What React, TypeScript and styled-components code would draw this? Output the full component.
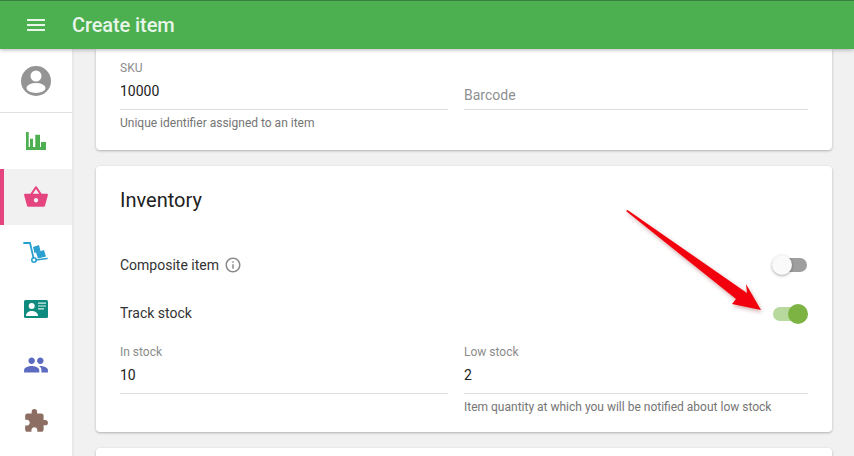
import React from "react";
import styled, { createGlobalStyle } from "styled-components";
import {
  MdExtension,
  MdInfoOutline,
  MdMenu,
  MdPeople,
  MdShoppingBasket,
} from "react-icons/md";

const GlobalStyle = createGlobalStyle`
  html, body {
    margin: 0;
    height: 100%;
    overflow: hidden;
    background: #f1f1f1;
    font-family: Roboto, "Liberation Sans", sans-serif;
  }
`;

const Page = styled.div`
  display: flex;
  flex-direction: column;
  width: 854px;
  height: 456px;
  overflow: hidden;
`;

const Header = styled.header`
  position: relative;
  z-index: 2;
  flex: none;
  display: flex;
  align-items: center;
  box-sizing: border-box;
  height: 49px;
  padding-left: 24px;
  gap: 24px;
  background: #4caf50;
  border-top: 1px solid #39803c;
  box-shadow: 0 1px 4px rgba(0, 0, 0, 0.28);
  color: #e8f5e9;
`;

const Title = styled.h1`
  margin: 0;
  font-size: 20px;
  font-weight: 500;
  line-height: 24px;
  letter-spacing: -0.1px;
`;

const Body = styled.div`
  flex: 1;
  display: flex;
  min-height: 0;
`;

const Sidebar = styled.nav`
  flex: none;
  width: 72px;
  background: #fff;
  box-shadow: 1px 0 2px rgba(0, 0, 0, 0.06);
`;

const Profile = styled.div`
  display: flex;
  align-items: center;
  justify-content: center;
  height: 63px;
  border-bottom: 1px solid #e0e0e0;
  color: #949494;
`;

const NavItem = styled.div<{ $active?: boolean; $color: string }>`
  display: flex;
  align-items: center;
  justify-content: center;
  box-sizing: border-box;
  height: 56px;
  color: ${(p) => p.$color};
  background: ${(p) => (p.$active ? "#f1f1f1" : "transparent")};
  border-left: 4px solid ${(p) => (p.$active ? "#e5457f" : "transparent")};
  padding-right: 4px;
`;

const Main = styled.main`
  flex: 1;
  min-width: 0;
  display: flex;
  flex-direction: column;
  gap: 16px;
  padding: 0 22px 0 24px;
`;

const Card = styled.section<{ $cut?: boolean }>`
  position: relative;
  flex: none;
  box-sizing: border-box;
  padding: 0 24px;
  background: #fff;
  border-radius: ${(p) => (p.$cut ? "0 0 4px 4px" : "4px")};
  box-shadow: 0 1px 3px rgba(0, 0, 0, 0.2), 0 1px 2px rgba(0, 0, 0, 0.08);
`;

const SkuCard = styled(Card)`
  height: 101px;
  padding-top: 11px;
`;

const InventoryCard = styled(Card)`
  height: 266px;
  padding-top: 22px;
`;

const NextCard = styled(Card)`
  height: 40px;
`;

const CardTitle = styled.h2`
  margin: 0 0 41px;
  font-size: 20px;
  font-weight: 400;
  line-height: 24px;
  color: #212121;
`;

const ToggleRow = styled.div`
  display: flex;
  align-items: center;
  justify-content: space-between;
  height: 24px;
  margin-bottom: 24px;
`;

const ToggleLabel = styled.span`
  display: flex;
  align-items: center;
  gap: 5px;
  font-size: 14px;
  color: #333;

  svg {
    color: #8a8a8a;
  }
`;

const Track = styled.span<{ $on?: boolean }>`
  position: relative;
  display: block;
  width: 34px;
  height: 14px;
  margin: ${(p) => (p.$on ? "2px" : "0")} 1px 0 0;
  border-radius: 7px;
  background: ${(p) => (p.$on ? "#b7d99d" : "#9e9e9e")};
`;

const Thumb = styled.span<{ $on?: boolean }>`
  position: absolute;
  top: -3px;
  left: ${(p) => (p.$on ? "15px" : "-1px")};
  width: 20px;
  height: 20px;
  border-radius: 50%;
  background: ${(p) => (p.$on ? "#7cb342" : "#fafafa")};
  box-shadow: ${(p) =>
    p.$on ? "none" : "0 1px 3px rgba(0, 0, 0, 0.35)"};
`;

const Fields = styled.div`
  display: grid;
  grid-template-columns: 328px 344px;
  column-gap: 16px;
`;

const StockFields = styled(Fields)`
  margin-top: -5px;
`;

const Field = styled.div`
  display: flex;
  flex-direction: column;
`;

const FieldLabel = styled.label`
  height: 16px;
  font-size: 12px;
  line-height: 16px;
  color: #8c8c8c;
`;

const FieldValue = styled.div<{ $placeholder?: boolean }>`
  box-sizing: border-box;
  height: 34px;
  padding-top: ${(p) => (p.$placeholder ? "9px" : "5px")};
  border-bottom: 1px solid #dedede;
  font-size: 14px;
  line-height: 20px;
  color: ${(p) => (p.$placeholder ? "#8f8f8f" : "#212121")};
`;

const Hint = styled.div`
  margin-top: 5px;
  font-size: 12px;
  line-height: 16px;
  color: #757575;
`;

const Arrow = styled.svg`
  position: absolute;
  left: 530px;
  top: 40px;
  overflow: visible;
  filter: drop-shadow(1px 2px 2px rgba(120, 0, 0, 0.35));
`;

const ProfileIcon = () => (
  <svg width="30" height="30" viewBox="0 0 30 30">
    <circle cx="15" cy="15" r="15" fill="currentColor" />
    <circle cx="15" cy="10" r="5.5" fill="#fff" />
    <ellipse cx="15" cy="22" rx="9.500" ry="5" fill="#fff" />
  </svg>
);

const StatsIcon = () => (
  <svg width="20" height="18" viewBox="0 0 20 18" fill="currentColor">
    <path d="M0 0h2.700v15H4V6.700h3V15h2.300V2.700H14V15h1v-5h5v8H0z" />
  </svg>
);

const CartIcon = () => (
  <svg width="26" height="26" viewBox="0 0 26 26" fill="none">
    <path
      d="M1 3h6l3.500 15"
      stroke="currentColor"
      strokeWidth="1.8"
      strokeLinecap="round"
    />
    <path
      d="M13 20l11-1.500"
      stroke="currentColor"
      strokeWidth="1.600"
      strokeLinecap="round"
    />
    <circle cx="11" cy="20" r="2.200" stroke="currentColor" strokeWidth="1.600" />
    <path
      fill="currentColor"
      d="M10 7l6-2 1.500 6-6 2zM13 12.500l8-2.500 2 6.500-8 2z"
    />
  </svg>
);

const IdCardIcon = () => (
  <svg width="24" height="18" viewBox="0 0 24 18">
    <rect width="24" height="18" rx="1.5" fill="currentColor" />
    <circle cx="7.700" cy="6" r="3" fill="#fff" />
    <path d="M2 16c0-3.500 2.800-5 5.800-5s6.200 1.500 6.200 5z" fill="#fff" />
    <path d="M14 2.500h8v1.200h-8zM14 5.400h8v1.200h-8zM14 8.300h6v1.200h-6z" fill="#d5efe9" />
  </svg>
);

const RedArrow = () => (
  <Arrow width="140" height="104" viewBox="0 0 140 104">
    <polygon
      points="0,5 1.500,4 121,87 120,78 135,104 106,98 110,93"
      fill="#f2000d"
    />
  </Arrow>
);

function App() {
  return (
    <Page>
      <GlobalStyle />
      <Header>
        <MdMenu size={24} />
        <Title>Create item</Title>
      </Header>
      <Body>
        <Sidebar>
          <Profile>
            <ProfileIcon />
          </Profile>
          <NavItem $color="#4caf50">
            <StatsIcon />
          </NavItem>
          <NavItem $active $color="#e5457f">
            <MdShoppingBasket size={26} />
          </NavItem>
          <NavItem $color="#2b9fd0">
            <CartIcon />
          </NavItem>
          <NavItem $color="#0f8a7e">
            <IdCardIcon />
          </NavItem>
          <NavItem $color="#5c6bc0">
            <MdPeople size={26} />
          </NavItem>
          <NavItem $color="#8d6e63">
            <MdExtension size={26} />
          </NavItem>
        </Sidebar>
        <Main>
          <SkuCard $cut>
            <Fields>
              <Field>
                <FieldLabel>SKU</FieldLabel>
                <FieldValue>10000</FieldValue>
                <Hint>Unique identifier assigned to an item</Hint>
              </Field>
              <Field>
                <FieldLabel />
                <FieldValue $placeholder>Barcode</FieldValue>
              </Field>
            </Fields>
          </SkuCard>
          <InventoryCard>
            <CardTitle>Inventory</CardTitle>
            <ToggleRow>
              <ToggleLabel>
                Composite item <MdInfoOutline size={18} />
              </ToggleLabel>
              <Track>
                <Thumb />
              </Track>
            </ToggleRow>
            <ToggleRow>
              <ToggleLabel>Track stock</ToggleLabel>
              <Track $on>
                <Thumb $on />
              </Track>
            </ToggleRow>
            <StockFields>
              <Field>
                <FieldLabel>In stock</FieldLabel>
                <FieldValue>10</FieldValue>
              </Field>
              <Field>
                <FieldLabel>Low stock</FieldLabel>
                <FieldValue>2</FieldValue>
                <Hint>Item quantity at which you will be notified about low stock</Hint>
              </Field>
            </StockFields>
            <RedArrow />
          </InventoryCard>
          <NextCard />
        </Main>
      </Body>
    </Page>
  );
}

export default App;
